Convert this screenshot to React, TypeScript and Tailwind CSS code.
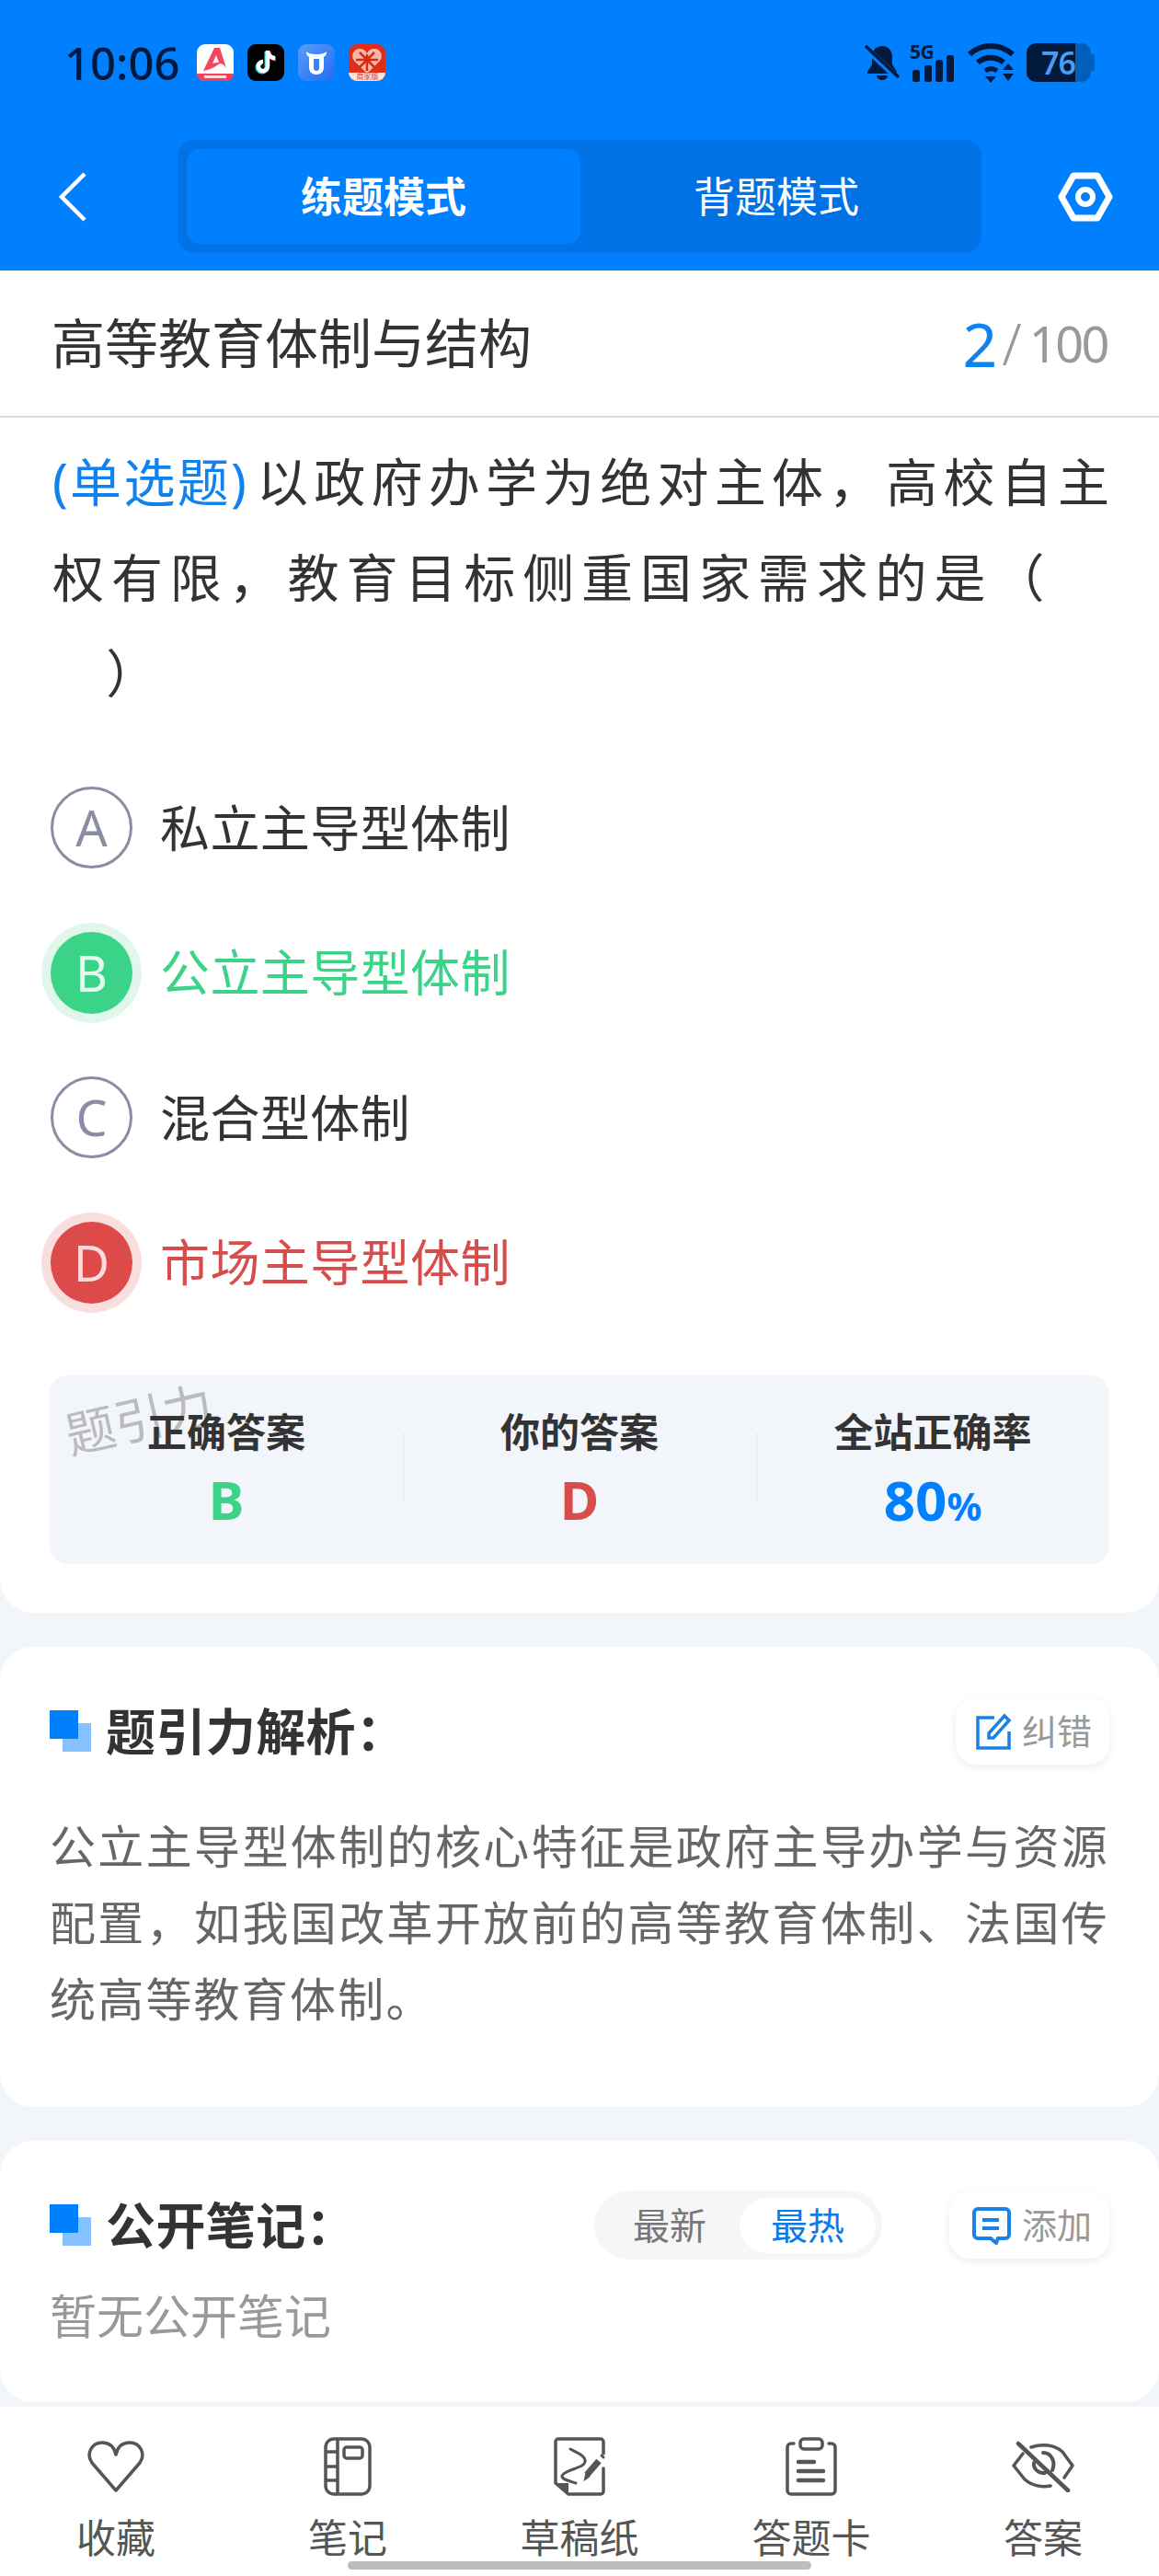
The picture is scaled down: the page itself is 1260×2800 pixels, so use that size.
const FONT = "font-['Noto_Sans','Noto_Sans_CJK_SC',sans-serif]";

function AppIcons() {
  return (
    <div className="flex items-center gap-[15px] ml-[19px]">
      <svg width="40" height="40" viewBox="0 0 40 40">
        <rect width="40" height="40" rx="9" fill="#fff" />
        <path d="M0 32h40v0a8 8 0 0 1-8 8H8a8 8 0 0 1-8-8z" fill="#f0405c" />
        <path d="M7 29 19 4h6l7 22c-3-5-7-6-10-3-4 3-9 5-15 6z" fill="#f4475f" />
        <path d="M17 21l4-9 3 8c-2 0-5 0-7 1z" fill="#fff" />
        <rect x="8" y="34" width="24" height="3" fill="#ffd6dc" />
      </svg>
      <svg width="40" height="40" viewBox="0 0 40 40">
        <rect width="40" height="40" rx="9" fill="#000" />
        <path d="M21 8v17a5 5 0 1 1-5-5" fill="none" stroke="#2be5e0" strokeWidth="5" />
        <path d="M23 8c0 5 4 8 8 8" fill="none" stroke="#f5325a" strokeWidth="5" />
        <path d="M22 7v17a5 5 0 1 1-5-5M22 7c0 5 4 8 8 8" fill="none" stroke="#fff" strokeWidth="4.5" />
      </svg>
      <svg width="40" height="40" viewBox="0 0 40 40">
        <defs>
          <linearGradient id="cow" x1="0" y1="0" x2="1" y2="1">
            <stop offset="0" stopColor="#5a9dfa" />
            <stop offset="1" stopColor="#1f6cf5" />
          </linearGradient>
        </defs>
        <rect width="40" height="40" rx="9" fill="url(#cow)" />
        <path d="M9 8c0 3 1 5 3 6v11c0 5 3 8 8 8s8-3 8-8V14c2-1 3-3 3-6-2 2-5 3-11 3S11 10 9 8z" fill="#fff" />
        <path d="M17 16h6v10c0 2-1 3-3 3s-3-1-3-3z" fill="#3a80f6" />
      </svg>
      <div className="relative w-[40px] h-[40px] rounded-[9px] bg-[#e02e1c]">
        <svg width="40" height="40" viewBox="0 0 40 40" className="block rounded-[9px]">
          <path d="M20 32 6 18c-4-5-1-13 6-13 3 0 6 1 8 5 2-4 5-5 8-5 7 0 10 8 6 13z" fill="#f8b8a8" />
          <path d="M12 9l16 16M28 9 12 25M20 11v18M8 17h24" stroke="#d92a18" strokeWidth="2.5" />
          <rect x="0" y="31" width="40" height="9" fill="#fde0d8" />
        </svg>
        <span className="absolute inset-x-0 bottom-[1px] text-center text-[8px] leading-[8px] text-[#d0442f]">商家版</span>
      </div>
    </div>
  );
}

function StatusIcons() {
  return (
    <div className="flex items-center ml-auto mr-[70px]">
      <svg width="38" height="42" viewBox="0 0 38 42" fill="#00193d">
        <path d="M19 3c7 0 11 5 11 12v8l5 8v2H3v-2l5-8v-8C8 8 12 3 19 3z" />
        <path d="M13 35h12c0 3-3 5-6 5s-6-2-6-5z" />
        <path d="M1 5 37 39" stroke="#0080ff" strokeWidth="7" />
        <path d="M1 3 37 37" stroke="#00193d" strokeWidth="3.5" />
      </svg>
      <div className="relative w-[50px] h-[42px] ml-[12px]">
        <span className="absolute left-[-1px] top-[-3px] text-[21px] leading-[24px] font-bold tracking-[-0.5px] text-[#00193d]">5G</span>
        <svg width="50" height="42" viewBox="0 0 50 42" fill="#00193d" className="absolute inset-0">
          <rect x="2" y="29" width="8" height="13" rx="2.5" />
          <rect x="15" y="24" width="8" height="18" rx="2.5" />
          <rect x="27" y="18" width="8" height="24" rx="2.5" />
          <rect x="39" y="13" width="8" height="29" rx="2.5" />
        </svg>
      </div>
      <svg width="53" height="44" viewBox="0 0 53 44" fill="none" stroke="#00193d" strokeWidth="6" className="ml-[12px]">
        <path d="M2 13C15 1 35 1 49 13" />
        <path d="M11 22c8-7 20-7 28 0" />
        <path d="M19 31c4-3 9-3 13 0" strokeWidth="5" />
        <path d="M19 37h12l-6 7zM38 30l6-7 6 7zM38 34h12l-6 8z" fill="#00193d" stroke="none" />
      </svg>
      <div className="ml-[11px] flex items-center">
        <div className="flex w-[70px] h-[42px]">
          <div className="w-[53px] rounded-l-[10px] bg-[#00193d] flex items-center justify-end text-[34px] leading-none font-semibold tracking-[-1px] text-[#4a9cf0]">76</div>
          <div className="flex-1 rounded-r-[10px] bg-[#005fb8]" />
        </div>
        <div className="w-[4px] h-[18px] rounded-r-[3px] bg-[#005fb8]" />
      </div>
    </div>
  );
}

function Header() {
  return (
    <header className="bg-[#0080ff] h-[294px] shrink-0">
      <div className="h-[136px] flex items-center pl-[70px]">
        <span className="text-[49px] leading-none text-[#00193d] font-medium">10:06</span>
        <AppIcons />
        <StatusIcons />
      </div>
      <div className="flex items-center pl-[64px] pr-[50px] pt-[16px]">
        <svg width="30" height="54" viewBox="0 0 30 54" fill="none" stroke="#fff" strokeWidth="4.5">
          <path d="M28 2 3 27l25 25" />
        </svg>
        <div className="ml-[99px] w-[874px] h-[123px] rounded-[18px] bg-[#0072e6] p-[10px] flex">
          <div className="w-[428px] rounded-[14px] bg-[#0080ff] flex items-center justify-center text-[45px] font-bold text-white">练题模式</div>
          <div className="flex-1 flex items-center justify-center text-[45px] text-white">背题模式</div>
        </div>
        <svg width="60" height="54" viewBox="0 0 60 54" fill="none" stroke="#fff" strokeWidth="7" className="ml-auto">
          <path d="M17 4h26l13 23-13 23H17L4 27z" strokeLinejoin="round" />
          <circle cx="30" cy="27" r="8" strokeWidth="6" />
        </svg>
      </div>
    </header>
  );
}

type OptionProps = { letter: string; text: string; state?: "right" | "wrong" };

function Option({ letter, text, state }: OptionProps) {
  let circle = "border-[3px] border-[#8a8da3] text-[#8a8da3]";
  let label = "text-[#333333]";
  if (state === "right") {
    circle = "bg-[#3bd387] text-[#e3f8ee] ring-[10px] ring-[#e1f7ec]";
    label = "text-[#3bd387]";
  }
  if (state === "wrong") {
    circle = "bg-[#dc4a4a] text-[#fadcdc] ring-[10px] ring-[#f9dede]";
    label = "text-[#d84c4c]";
  }
  return (
    <div className="flex items-center h-[89px]">
      <div className={"w-[89px] h-[89px] rounded-full flex items-center justify-center text-[54px] " + circle}>{letter}</div>
      <span className={"ml-[30px] text-[54px] leading-none tracking-[0.4px] " + label}>{text}</span>
    </div>
  );
}

function Stat({ label, children, divider }: { label: string; children: React.ReactNode; divider?: boolean }) {
  return (
    <div className="relative flex-1 flex flex-col items-center pt-[36px]">
      {divider && <div className="absolute left-0 top-[62px] h-[74px] w-[2px] bg-[#ebeef2]" />}
      <div className="text-[43px] leading-[52px] font-bold text-[#333333]">{label}</div>
      <div className="mt-[17px] leading-[60px] font-bold">{children}</div>
    </div>
  );
}

function SectionTitle({ text }: { text: string }) {
  return (
    <div className="flex items-center">
      <div className="relative w-[45px] h-[45px] shrink-0">
        <div className="absolute left-[14px] top-[14px] w-[31px] h-[31px] bg-[#85c2ff]" />
        <div className="absolute left-0 top-0 w-[31px] h-[31px] bg-[#0080ff]" />
      </div>
      <span className="ml-[16px] text-[54px] leading-none font-bold tracking-[0.4px] text-[#333333]">{text}</span>
    </div>
  );
}

function ActionButton({ text, icon, width }: { text: string; icon: React.ReactNode; width: string }) {
  return (
    <div className={"flex items-center justify-end gap-[12px] pr-[19px] h-[73px] rounded-[22px] bg-white shadow-[0_3px_10px_rgba(0,0,0,0.08)] text-[38px] text-[#999999] " + width}>
      {icon}
      {text}
    </div>
  );
}

function NavItem({ label, children }: { label: string; children: React.ReactNode }) {
  return (
    <div className="flex-1 flex flex-col items-center">
      <div className="h-[66px] flex items-center justify-center">{children}</div>
      <div className="mt-[20px] text-[43px] leading-[50px] text-[#555555]">{label}</div>
    </div>
  );
}

export default function App() {
  return (
    <div className={"relative w-[1260px] h-[2800px] overflow-hidden bg-[#f2f5f9] flex flex-col " + FONT}>
      <Header />

      <section className="bg-white rounded-b-[36px] h-[1459px] shrink-0">
        <div className="h-[160px] border-b-2 border-[#dddddd] flex items-center px-[56px]">
          <h1 className="text-[58px] leading-none text-[#333333] font-normal">高等教育体制与结构</h1>
          <div className="ml-auto flex items-center text-[#999999]">
            <span className="text-[66px] leading-none text-[#0f82f0]">2</span>
            <span className="ml-[5px] text-[62px] leading-none font-light">/</span>
            <span className="ml-[8px] text-[54px] leading-none tracking-[-2.5px]">100</span>
          </div>
        </div>
        <p className="mt-[17px] px-[57px] whitespace-nowrap text-[56px] leading-[104px] text-[#333333]">
          <span className="text-[#0f82f0] tracking-[2.3px] mr-[9px]">(单选题)</span>
          <span className="tracking-[6.2px]">以政府办学为绝对主体，高校自主</span>
          <br />
          <span className="tracking-[7.9px]">权有限，教育目标侧重国家需求的是（</span>
          <br />
          &nbsp;&nbsp;&nbsp;&nbsp;）
        </p>
        <div className="mt-[72px] pl-[55px] flex flex-col gap-[68.5px]">
          <Option letter="A" text="私立主导型体制" />
          <Option letter="B" text="公立主导型体制" state="right" />
          <Option letter="C" text="混合型体制" />
          <Option letter="D" text="市场主导型体制" state="wrong" />
        </div>
        <div className="relative mt-[78px] mx-[54px] h-[205px] rounded-[20px] bg-[#f2f5f9] flex">
          <div className="absolute left-[16px] top-[20px] -rotate-[13deg] text-[54px] leading-none text-[#bbbbbb]">题引力</div>
          <Stat label="正确答案"><span className="text-[58px] text-[#3bd387]">B</span></Stat>
          <Stat label="你的答案" divider><span className="text-[58px] text-[#d84c4c]">D</span></Stat>
          <Stat label="全站正确率" divider>
            <span className="text-[60px] text-[#0080ff]">80</span>
            <span className="text-[42px] text-[#0080ff]">%</span>
          </Stat>
        </div>
      </section>

      <section className="mt-[37px] bg-white rounded-[36px] h-[500px] shrink-0 px-[54px] pt-[55px]">
        <div className="flex items-center justify-between">
          <SectionTitle text="题引力解析：" />
          <ActionButton
            text="纠错"
            width="w-[167px]"
            icon={
              <svg width="38" height="40" viewBox="0 0 38 40" fill="none" stroke="#1a82e6" strokeWidth="3.5">
                <path d="M20 5H2v33h34V20" />
                <path d="M14 27v-5L31 3l5 5-17 19z" />
              </svg>
            }
          />
        </div>
        <p className="mt-[48px] text-justify text-[50px] leading-[83px] tracking-[2.2px] text-[#666666]">
          公立主导型体制的核心特征是政府主导办学与资源配置，如我国改革开放前的高等教育体制、法国传统高等教育体制。
        </p>
      </section>

      <section className="mt-[37px] bg-white rounded-[36px] h-[284px] shrink-0 px-[54px] pt-[54px]">
        <div className="flex items-center">
          <SectionTitle text="公开笔记：" />
          <div className="ml-auto h-[75px] w-[313px] rounded-full bg-[#f6f6f6] flex items-center pl-[42px] pr-[5px] text-[40px] text-[#777777]">
            <span>最新</span>
            <span className="ml-[36px] h-[60px] w-[148px] rounded-full bg-white flex items-center justify-center text-[#0a7ce8]">最热</span>
          </div>
          <div className="ml-[73px]">
            <ActionButton
              text="添加"
              width="w-[174px]"
              icon={
                <svg width="42" height="42" viewBox="0 0 42 42" fill="none" stroke="#1a82e6" strokeWidth="4">
                  <path d="M6 3h30a4 4 0 0 1 4 4v24a4 4 0 0 1-4 4h-8l-2 5-6-5H6a4 4 0 0 1-4-4V7a4 4 0 0 1 4-4z" />
                  <path d="M11 15h18M11 24h18" />
                </svg>
              }
            />
          </div>
        </div>
        <p className="mt-[31px] text-[51px] leading-[60px] text-[#999999]">暂无公开笔记</p>
      </section>

      <nav className="mt-auto h-[184px] shrink-0 bg-white flex pt-[32px]">
        <NavItem label="收藏">
          <svg width="64" height="56" viewBox="0 0 64 56" fill="none" stroke="#555555" strokeWidth="3.5" strokeLinejoin="round">
            <path d="M32 54 6 24C-1 14 6 2 17 2c7 0 13 4 15 13C34 6 40 2 47 2c11 0 18 12 11 22z" />
          </svg>
        </NavItem>
        <NavItem label="笔记">
          <svg width="52" height="64" viewBox="0 0 52 64" fill="none" stroke="#555555" strokeWidth="3.5">
            <rect x="2" y="2" width="48" height="60" rx="9" />
            <path d="M15 2v60M2 16h13M2 32h13M2 47h13" />
            <rect x="22" y="11" width="20" height="12" rx="3" />
          </svg>
        </NavItem>
        <NavItem label="草稿纸">
          <svg width="56" height="64" viewBox="0 0 56 64" fill="none" stroke="#555555" strokeWidth="3.5" strokeLinecap="round">
            <path d="M54 18V5a3 3 0 0 0-3-3H5a3 3 0 0 0-3 3v45l14 12h35a3 3 0 0 0 3-3V34" />
            <path d="M2 50h14v12z" fill="#555555" stroke="none" />
            <path d="M18 13c8 4 20 9 15 16-3 5-22 7-24 13-1 4 9 6 15 8" strokeWidth="3" />
            <path d="M36 41 49 26" strokeWidth="7" strokeLinecap="butt" />
            <path d="M34 46l1-5 3 2z" fill="#555555" strokeWidth="2" />
            <path d="M52 20l2 2" strokeWidth="3" />
          </svg>
        </NavItem>
        <NavItem label="答题卡">
          <svg width="56" height="64" viewBox="0 0 56 64" fill="none" stroke="#555555" strokeWidth="3.5" strokeLinecap="round">
            <path d="M9 7H6a4 4 0 0 0-4 4v47a4 4 0 0 0 4 4h44a4 4 0 0 0 4-4V11a4 4 0 0 0-4-4h-3" />
            <rect x="16" y="2" width="24" height="11" rx="4" />
            <path d="M14 27h17M14 37h27M14 47h27" strokeWidth="4.5" />
          </svg>
        </NavItem>
        <NavItem label="答案">
          <svg width="68" height="56" viewBox="0 0 68 56" fill="none" stroke="#555555" strokeWidth="3.5" strokeLinecap="round" strokeLinejoin="round">
            <path d="M12 14 2 27l12 15c8 7 19 9 28 7" />
            <path d="M21 7c12-4 25-3 34 5l11 15-9 13" />
            <path d="M34 13c9 0 14 10 10 19M24 24c-1 6 5 12 12 11" strokeWidth="4" />
            <path d="M7 3 61 54" strokeWidth="4.5" />
          </svg>
        </NavItem>
      </nav>

      <div className="absolute left-[378px] top-[2784px] w-[504px] h-[9px] rounded-full bg-[#bdbdbd]" />
    </div>
  );
}
